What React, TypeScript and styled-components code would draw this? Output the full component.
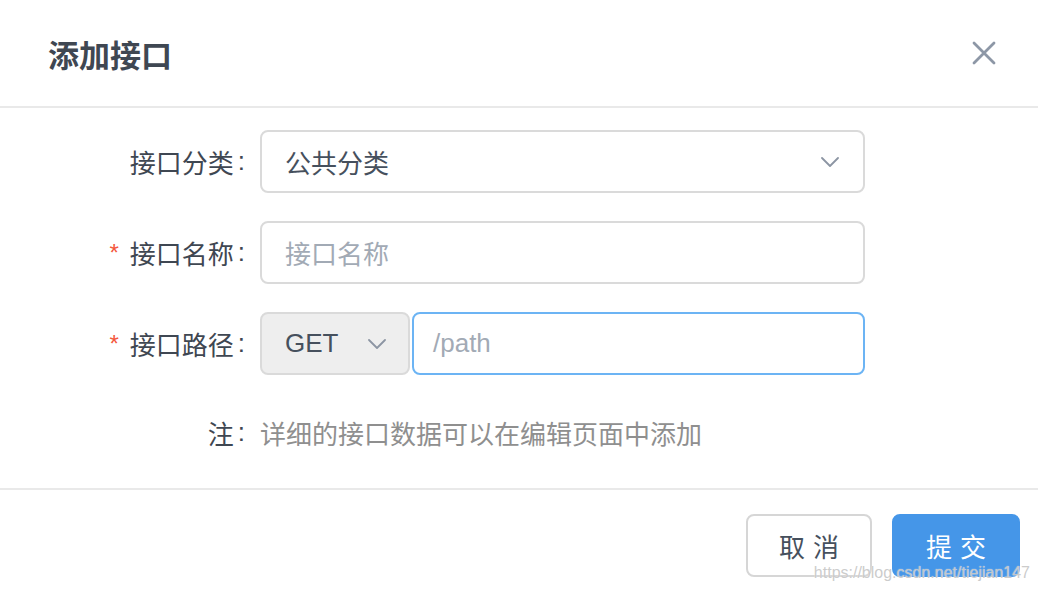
import * as React from 'react'
import styled, { createGlobalStyle } from 'styled-components'

//=================================/
const GlobalStyle = createGlobalStyle`
    html, body {
        margin: 0;
        padding: 0;
        background: #ffffff;
    }
    body {
        font-family: "Liberation Sans", "Noto Sans CJK SC", sans-serif;
    }
`;

const Modal = styled.div`
    position: relative;
    width: 1038px;
    height: 592px;
    background: #ffffff;
    display: flex;
    flex-direction: column;
    overflow: hidden;
`;

const Header = styled.div`
    height: 106px;
    border-bottom: 2px solid #e9e9e9;
    display: flex;
    align-items: center;
    justify-content: space-between;
    padding: 0 38px 0 48px;
`;

const Title = styled.h2`
    margin: 0;
    font-size: 31px;
    font-weight: 700;
    color: #3f4752;
`;

const CloseButton = styled.button`
    border: none;
    background: none;
    padding: 0;
    width: 32px;
    height: 32px;
    display: flex;
    align-items: center;
    justify-content: center;
    cursor: pointer;
`;

const Body = styled.div`
    flex: 1;
    padding: 22px 0 0 0;
    display: grid;
    grid-template-columns: 245px 605px;
    grid-template-rows: repeat(3, 63px) 58px;
    column-gap: 15px;
    row-gap: 28px;
    align-content: start;
    border-bottom: 2px solid #e9e9e9;
`;

const Label = styled.label`
    display: flex;
    align-items: center;
    justify-content: flex-end;
    font-size: 26px;
    color: #3f4752;
`;

const Required = styled.span`
    color: #f4583d;
    font-size: 24px;
    margin-right: 11px;
    font-family: "Liberation Sans", sans-serif;
`;

const Colon = styled.span`
    margin-left: 4px;
`;

const Field = styled.div<{ $focus?: boolean; $gray?: boolean }>`
    box-sizing: border-box;
    height: 63px;
    border: 2px solid ${props => props.$focus ? '#6cb4f4' : '#dadada'};
    border-radius: 8px;
    background: ${props => props.$gray ? '#eeeeee' : '#ffffff'};
    display: flex;
    align-items: center;
    justify-content: space-between;
    padding: 0 24px 0 23px;
    font-size: 26px;
    color: #46505d;
`;

const Placeholder = styled.span`
    color: #a2aab5;
`;

const PathGroup = styled.div`
    display: flex;
    gap: 2px;
`;

const MethodSelect = styled(Field)`
    width: 150px;
    padding-right: 22px;
`;

const PathInput = styled(Field)`
    flex: 1;
    padding-left: 19px;
`;

const NoteText = styled.div`
    display: flex;
    align-items: center;
    font-size: 26px;
    color: #8f8f8f;
`;

const Footer = styled.div`
    height: 102px;
    display: flex;
    justify-content: flex-end;
    align-items: flex-start;
    padding: 24px 18px 0 0;
    gap: 20px;
    box-sizing: border-box;
`;

const Button = styled.button<{ $primary?: boolean }>`
    box-sizing: border-box;
    height: 63px;
    width: ${props => props.$primary ? '128px' : '126px'};
    border-radius: 8px;
    border: 2px solid ${props => props.$primary ? '#4596e8' : '#d6d6d6'};
    background: ${props => props.$primary ? '#4596e8' : '#ffffff'};
    color: ${props => props.$primary ? '#ffffff' : '#46505d'};
    font-family: "Liberation Sans", "Noto Sans CJK SC", sans-serif;
    font-size: 26px;
    letter-spacing: 8px;
    padding: 0 0 0 8px;
    cursor: pointer;
`;

const Watermark = styled.div`
    position: absolute;
    right: 8px;
    bottom: 10px;
    font-family: "Liberation Sans", sans-serif;
    font-size: 16px;
    color: rgba(190, 190, 190, 0.8);
    text-shadow: 0 0 1px rgba(255, 255, 255, 0.9);
    pointer-events: none;
`;
//=================================/

const Chevron: React.FC = () => (
    <svg width="18" height="10" viewBox="0 0 18 10" fill="none">
        <path d="M1 1 L9 9 L17 1" stroke="#8c95a3" strokeWidth="1.8" strokeLinecap="round" strokeLinejoin="round" />
    </svg>
);

const CloseIcon: React.FC = () => (
    <svg width="24" height="24" viewBox="0 0 24 24" fill="none">
        <path d="M2 2 L22 22 M22 2 L2 22" stroke="#8d97a6" strokeWidth="2.8" strokeLinecap="round" />
    </svg>
);

//=====================================================================================//
export default function App() {
    return (
        <>
            <GlobalStyle />
            <Modal>
                <Header>
                    <Title>添加接口</Title>
                    <CloseButton aria-label="close"><CloseIcon /></CloseButton>
                </Header>

                <Body>
                    <Label>接口分类<Colon>:</Colon></Label>
                    <Field>
                        <span>公共分类</span>
                        <Chevron />
                    </Field>

                    <Label><Required>*</Required>接口名称<Colon>:</Colon></Label>
                    <Field>
                        <Placeholder>接口名称</Placeholder>
                    </Field>

                    <Label><Required>*</Required>接口路径<Colon>:</Colon></Label>
                    <PathGroup>
                        <MethodSelect $gray>
                            <span>GET</span>
                            <Chevron />
                        </MethodSelect>
                        <PathInput $focus>
                            <Placeholder>/path</Placeholder>
                        </PathInput>
                    </PathGroup>

                    <Label>注<Colon>:</Colon></Label>
                    <NoteText>详细的接口数据可以在编辑页面中添加</NoteText>
                </Body>

                <Footer>
                    <Button>取消</Button>
                    <Button $primary>提交</Button>
                </Footer>

                <Watermark>https://blog.csdn.net/tiejian147</Watermark>
            </Modal>
        </>
    );
}
//=====================================================================================//
